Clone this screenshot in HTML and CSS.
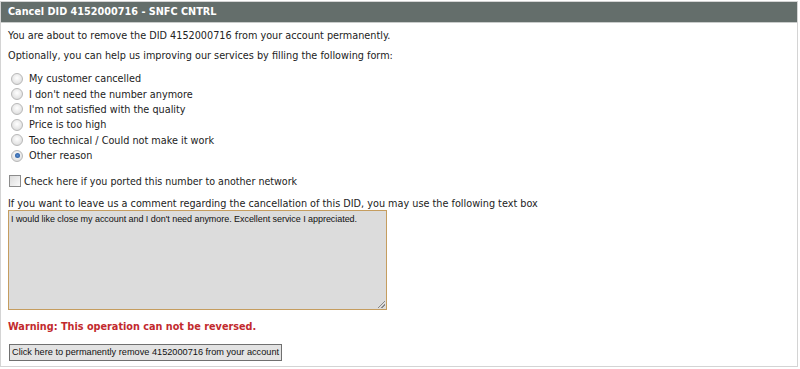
FILE: index.html
```html
<!DOCTYPE html>
<html>
<head>
<meta charset="utf-8">
<link rel="stylesheet" href="styles.css">
</head>
<body>
<div class="panel">
  <div class="header">Cancel DID 4152000716 - SNFC CNTRL</div>
  <div class="content">
    <p class="line1">You are about to remove the DID 4152000716 from your account permanently.</p>
    <p class="line2">Optionally, you can help us improving our services by filling the following form:</p>
    <div class="radios">
      <label class="radio"><span class="rb"></span>My customer cancelled</label>
      <label class="radio"><span class="rb"></span>I don't need the number anymore</label>
      <label class="radio"><span class="rb"></span>I'm not satisfied with the quality</label>
      <label class="radio"><span class="rb"></span>Price is too high</label>
      <label class="radio"><span class="rb"></span>Too technical / Could not make it work</label>
      <label class="radio"><span class="rb checked"></span>Other reason</label>
    </div>
    <label class="check"><span class="cb"></span>Check here if you ported this number to another network</label>
    <p class="comment-label">If you want to leave us a comment regarding the cancellation of this DID, you may use the following text box</p>
    <div class="textarea">I would like close my account and I don't need anymore. Excellent service I appreciated.<span class="grip"></span></div>
    <p class="warning">Warning: This operation can not be reversed.</p>
    <div class="btn">Click here to permanently remove 4152000716 from your account</div>
  </div>
</div>
</body>
</html>
```
FILE: styles.css
```css
html, body { margin: 0; padding: 0; background: #fff; }
body { font-family: "DejaVu Sans", Verdana, sans-serif; font-size: 9.7px; color: #222; }
.panel {
  width: 796px;
  height: 364px;
  margin-top: 1px;
  border: 1px solid #d4d4d4;
  box-sizing: content-box;
}
.header {
  height: 20px;
  background: #646e6b;
  color: #fff;
  font-weight: bold;
  line-height: 20px;
  padding-left: 7px;
  border-bottom: 1px solid #c9cccb;
}
.content { padding: 0 7px; }
p { margin: 0; }
.line1 { margin-top: 6px; line-height: 14px; }
.line2 { margin-top: 6px; line-height: 14px; }
.radios { margin-top: 8px; display: flex; flex-direction: column; }
.radio { display: flex; align-items: center; height: 15.4px; }
.rb {
  width: 10px; height: 10px; border-radius: 50%;
  border: 1px solid #b8b8b8;
  background: radial-gradient(circle at 50% 40%, #fff 0%, #e6e6e6 60%, #d0d0d0 100%);
  margin-left: 3px; margin-right: 6px;
  box-sizing: content-box;
  position: relative;
}
.rb.checked::after {
  content: ""; position: absolute; left: 2.5px; top: 2.5px; width: 5px; height: 5px;
  border-radius: 50%; background: radial-gradient(circle, #5a8ed0, #1d4f94);
}
.check {
  display: flex; align-items: center; margin-top: 10px; height: 15px;
  font-family: "DejaVu Sans Condensed", "DejaVu Sans", sans-serif; font-size: 10.6px;
}
.cb {
  width: 10px; height: 10px; border: 1px solid #8c8c8c;
  background: linear-gradient(135deg, #dcdcdc, #fafafa);
  margin-left: 1px; margin-right: 3px;
}
.comment-label { margin-top: 9px; line-height: 13px; }
.textarea {
  position: relative;
  width: 373px; height: 94px;
  margin-top: 0;
  border: 1px solid #c59d5f;
  background: #dcdcdc;
  font-family: "Liberation Sans", Arial, sans-serif;
  font-size: 9px;
  letter-spacing: -0.05px;
  color: #111;
  padding: 2px 2px;
  line-height: 12px;
  white-space: nowrap;
}
.grip {
  position: absolute; right: 1px; bottom: 1px; width: 7px; height: 7px;
  background: linear-gradient(135deg, transparent 45%, #888 45%, #888 55%, transparent 55%, transparent 70%, #888 70%, #888 80%, transparent 80%);
}
.warning { margin-top: 10px; color: #c22a2e; font-weight: bold; line-height: 14px; }
.btn {
  display: inline-block;
  margin-top: 10px;
  margin-left: 1px;
  font-family: "Liberation Sans", Arial, sans-serif;
  font-size: 9.2px;
  color: #111;
  background: #e3e3e3;
  border: 1px solid #707070;
  padding: 1px 2px;
  height: 13px;
  line-height: 13px;
}
```
